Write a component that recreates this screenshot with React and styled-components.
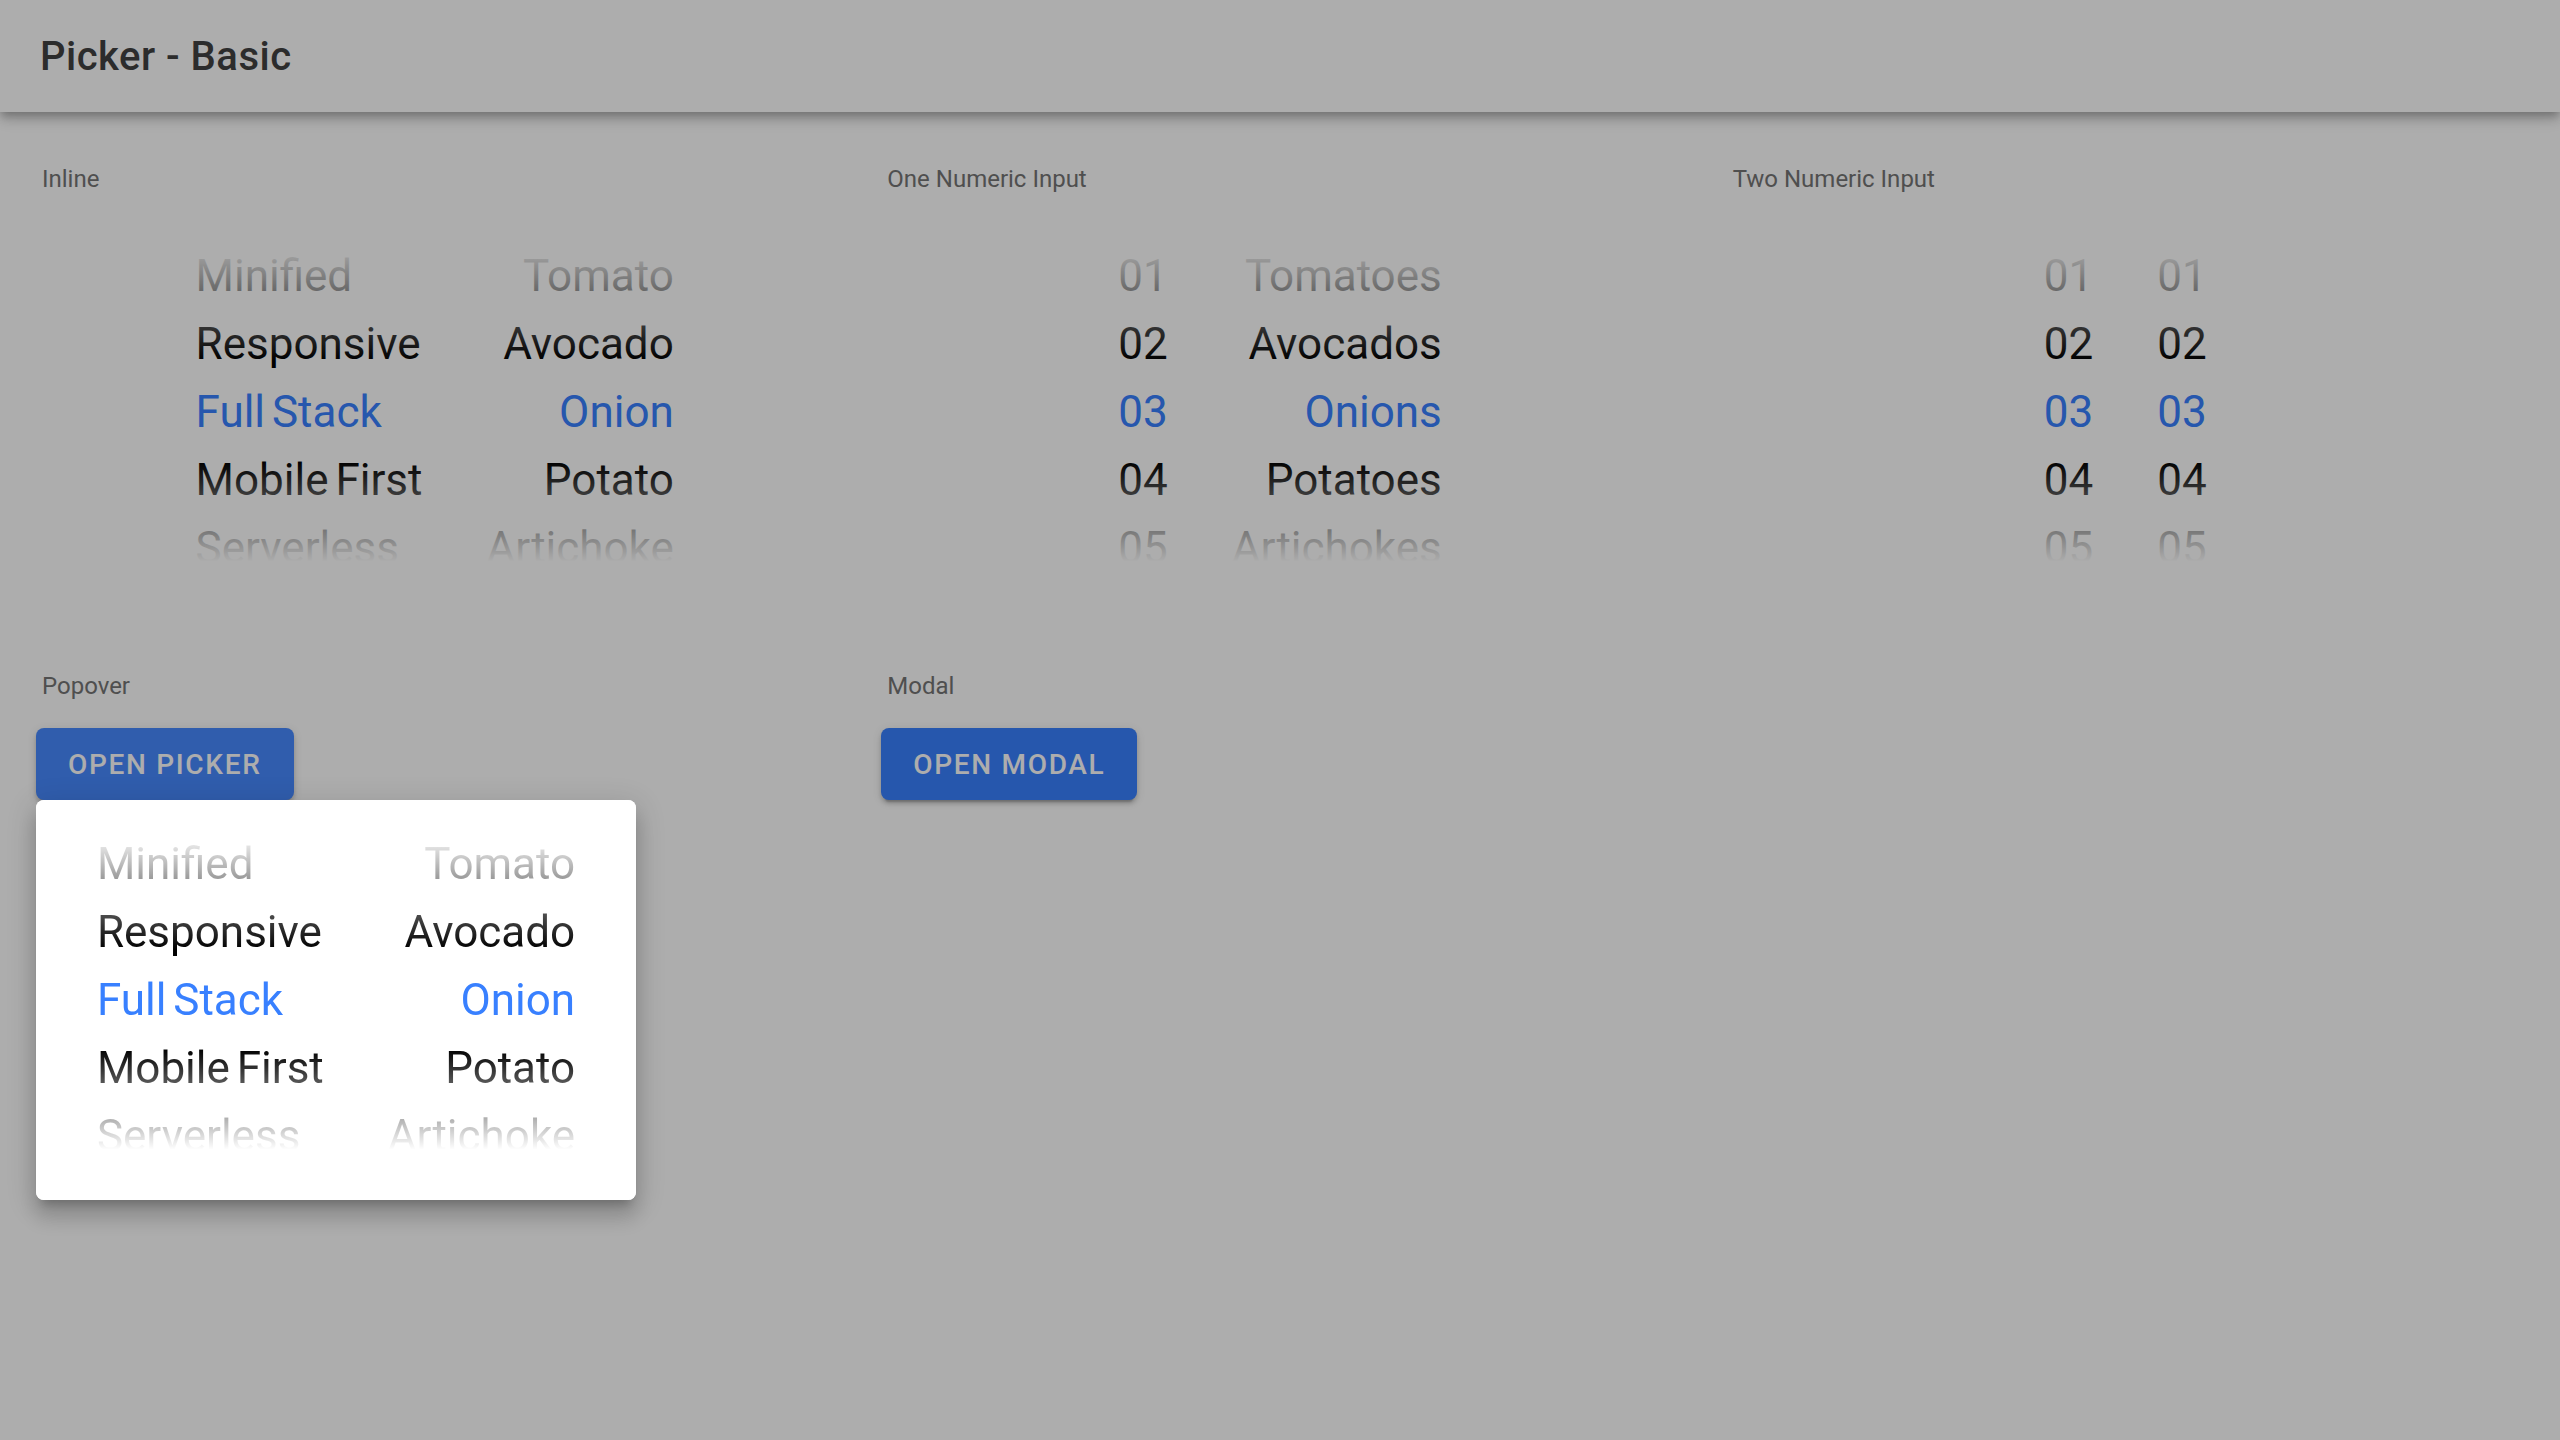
import React from 'react';
import styled, { createGlobalStyle } from 'styled-components';

const GlobalStyle = createGlobalStyle`
  html, body {
    margin: 0;
    padding: 0;
    background: #ffffff;
  }
  body {
    font-family: Roboto, "Noto Sans", "Liberation Sans", sans-serif;
    width: 2560px;
    height: 1440px;
    overflow: hidden;
    -webkit-font-smoothing: antialiased;
  }
  * { box-sizing: border-box; }
`;

const Page = styled.div`
  display: flex;
  flex-direction: column;
  min-height: 1440px;
  background: #ffffff;
`;

const Header = styled.header`
  position: relative;
  z-index: 1;
  height: 112px;
  display: flex;
  align-items: center;
  padding: 0 40px;
  background: #ffffff;
  box-shadow: 0 4px 8px -2px rgba(0, 0, 0, 0.2), 0 8px 10px 0 rgba(0, 0, 0, 0.14),
    0 2px 20px 0 rgba(0, 0, 0, 0.12);
`;

const Title = styled.h1`
  margin: 0;
  font-size: 40px;
  font-weight: 500;
  letter-spacing: 0.0125em;
  color: #424242;
`;

const Content = styled.main`
  display: flex;
  flex-direction: column;
  gap: 60px;
  padding: 53px 12px 0;
`;

const Row = styled.div`
  display: grid;
  grid-template-columns: repeat(3, 1fr);
`;

const Section = styled.section`
  display: flex;
  flex-direction: column;
  min-width: 0;
  padding: 0 24px;
`;

const Label = styled.div`
  padding-left: 6px;
  font-size: 24px;
  line-height: 28px;
  color: #757575;
`;

const PickerFrame = styled.div`
  position: relative;
  display: flex;
  justify-content: center;
  height: 400px;
  margin-top: ${(p) => p.$offset || 0}px;
  overflow: hidden;
`;

const Column = styled.div`
  display: flex;
  flex-direction: column;
  padding-top: 30px;
  text-align: ${(p) => p.$align};
`;

const Item = styled.div`
  height: 68px;
  padding: 0 32px;
  font-size: 44px;
  line-height: 68px;
  word-spacing: -4px;
  white-space: nowrap;
  color: ${(p) => (p.$active ? '#3880ff' : '#000000')};
`;

const FadeTop = styled.div`
  position: absolute;
  left: 0;
  right: 0;
  top: 0;
  height: 166px;
  pointer-events: none;
  background: linear-gradient(
    to bottom,
    rgba(255, 255, 255, 1) 20%,
    rgba(255, 255, 255, 0) 90%
  );
`;

const FadeBottom = styled.div`
  position: absolute;
  left: 0;
  right: 0;
  top: 232px;
  height: 168px;
  pointer-events: none;
  background: linear-gradient(
    to top,
    rgba(255, 255, 255, 1) 30%,
    rgba(255, 255, 255, 0) 90%
  );
`;

const ButtonAnchor = styled.div`
  position: relative;
  align-self: flex-start;
  margin-top: 28px;
`;

const Button = styled.button`
  display: flex;
  align-items: center;
  height: 72px;
  padding: 0 32px;
  border: 0;
  border-radius: 8px;
  background: ${(p) => (p.$hover ? '#488aff' : '#3880ff')};
  color: #ffffff;
  font-family: inherit;
  font-size: 28px;
  font-weight: 500;
  letter-spacing: 0.06em;
  text-transform: uppercase;
  box-shadow: 0 6px 2px -4px rgba(0, 0, 0, 0.2), 0 4px 4px 0 rgba(0, 0, 0, 0.14),
    0 2px 10px 0 rgba(0, 0, 0, 0.12);
  cursor: pointer;
`;

const Backdrop = styled.div`
  position: fixed;
  inset: 0;
  z-index: 10;
  background: rgba(0, 0, 0, 0.32);
`;

const Popover = styled.div`
  position: absolute;
  top: 100%;
  left: 0;
  z-index: 20;
  width: 600px;
  height: 400px;
  overflow: hidden;
  border-radius: 8px;
  background: #ffffff;
  box-shadow: 0 10px 10px -6px rgba(0, 0, 0, 0.2), 0 16px 20px 2px rgba(0, 0, 0, 0.14),
    0 6px 28px 4px rgba(0, 0, 0, 0.12);
`;

const nums = ['01', '02', '03', '04', '05'];
const tech = ['Minified', 'Responsive', 'Full Stack', 'Mobile First', 'Serverless'];
const veg = ['Tomato', 'Avocado', 'Onion', 'Potato', 'Artichoke'];
const vegs = ['Tomatoes', 'Avocados', 'Onions', 'Potatoes', 'Artichokes'];

const SELECTED = 2;

function Picker({ columns, offset }) {
  return (
    <PickerFrame $offset={offset}>
      {columns.map((col, ci) => (
        <Column key={ci} $align={col.align}>
          {col.items.map((it, i) => (
            <Item key={it} $active={i === SELECTED}>
              {it}
            </Item>
          ))}
        </Column>
      ))}
      <FadeTop />
      <FadeBottom />
    </PickerFrame>
  );
}

const inlineCols = [
  { align: 'left', items: tech },
  { align: 'right', items: veg },
];

export default function App() {
  return (
    <Page>
      <GlobalStyle />
      <Header>
        <Title>Picker - Basic</Title>
      </Header>
      <Content>
        <Row>
          <Section>
            <Label>Inline</Label>
            <Picker offset={19} columns={inlineCols} />
          </Section>
          <Section>
            <Label>One Numeric Input</Label>
            <Picker
              offset={19}
              columns={[
                { align: 'left', items: nums },
                { align: 'right', items: vegs },
              ]}
            />
          </Section>
          <Section>
            <Label>Two Numeric Input</Label>
            <Picker
              offset={19}
              columns={[
                { align: 'left', items: nums },
                { align: 'left', items: nums },
              ]}
            />
          </Section>
        </Row>
        <Row>
          <Section>
            <Label>Popover</Label>
            <ButtonAnchor>
              <Button $hover>Open Picker</Button>
              <Popover>
                <Picker columns={inlineCols} />
              </Popover>
            </ButtonAnchor>
          </Section>
          <Section>
            <Label>Modal</Label>
            <ButtonAnchor>
              <Button>Open Modal</Button>
            </ButtonAnchor>
          </Section>
          <Section />
        </Row>
      </Content>
      <Backdrop />
    </Page>
  );
}
